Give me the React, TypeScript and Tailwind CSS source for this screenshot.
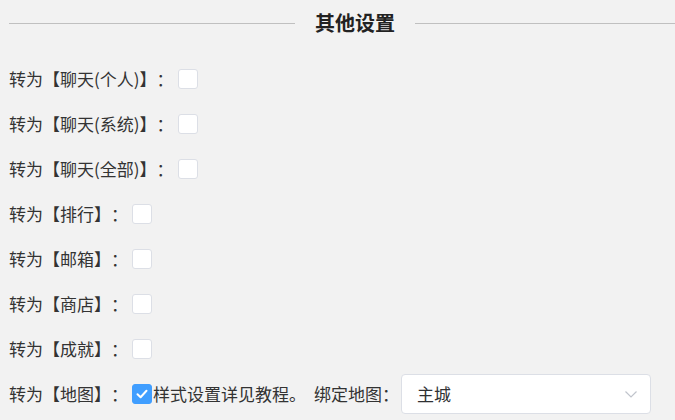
import { useState } from "react";

const font = {
  fontFamily: '"Noto Sans CJK SC", "Noto Sans", sans-serif',
};

const rows = [
  "转为【聊天(个人)】：",
  "转为【聊天(系统)】：",
  "转为【聊天(全部)】：",
  "转为【排行】：",
  "转为【邮箱】：",
  "转为【商店】：",
  "转为【成就】：",
];

const Box = ({ checked, onClick }: { checked: boolean; onClick: () => void }) => (
  <span
    onClick={onClick}
    className={
      checked
        ? "flex h-[20px] w-[20px] shrink-0 cursor-pointer items-center justify-center rounded-[3px] border border-[#409eff] bg-[#409eff]"
        : "flex h-[20px] w-[20px] shrink-0 cursor-pointer items-center justify-center rounded-[3px] border border-[#dcdfe6] bg-white"
    }
  >
    {checked && (
      <svg width="14" height="14" viewBox="0 0 14 14" fill="none">
        <path d="M2.5 7.2 5.6 10.2 11.5 3.8" stroke="white" strokeWidth="2" strokeLinecap="round" strokeLinejoin="round" />
      </svg>
    )}
  </span>
);

const App = () => {
  const [checks, setChecks] = useState<boolean[]>([false, false, false, false, false, false, false, true]);

  const toggle = (i: number) => {
    setChecks(checks.map((c, j) => (j === i ? !c : c)));
  };

  return (
    <div
      className="h-[420px] w-[675px] overflow-hidden bg-[#f2f2f2] text-[17px] text-[#333] [text-spacing-trim:space-all]"
      style={font}
    >
      {/* header */}
      <div className="flex h-[46px] items-center pl-[9px]">
        <div className="h-px w-[286px] bg-[#c0c0c0]" />
        <div className="mx-[20px] text-[20px] font-bold leading-none text-[#222]">其他设置</div>
        <div className="h-px flex-1 bg-[#c0c0c0]" />
      </div>

      <div className="pl-[9px] pt-[10px]">
        {rows.map((label, i) => (
          <div key={label} className="flex h-[45px] items-center">
            <span>{label}</span>
            <span className="ml-[4px]">
              <Box checked={checks[i]} onClick={() => toggle(i)} />
            </span>
          </div>
        ))}

        <div className="flex h-[45px] items-center">
          <span>转为【地图】：</span>
          <span className="ml-[4px]">
            <Box checked={checks[7]} onClick={() => toggle(7)} />
          </span>
          <span className="ml-px">样式设置详见教程。</span>
          <span className="ml-[8px]">绑定地图：</span>
          <div className="ml-[2px] flex h-[40px] w-[250px] items-center justify-between rounded-[4px] border border-[#dcdfe6] bg-white pl-[15px] pr-[12px]">
            <span className="text-[#303133]">主城</span>
            <svg width="14" height="14" viewBox="0 0 14 14" fill="none">
              <path d="M1.5 4.5 7 10l5.5-5.5" stroke="#c0c4cc" strokeWidth="1.2" />
            </svg>
          </div>
        </div>
      </div>
    </div>
  );
};

export default App;
